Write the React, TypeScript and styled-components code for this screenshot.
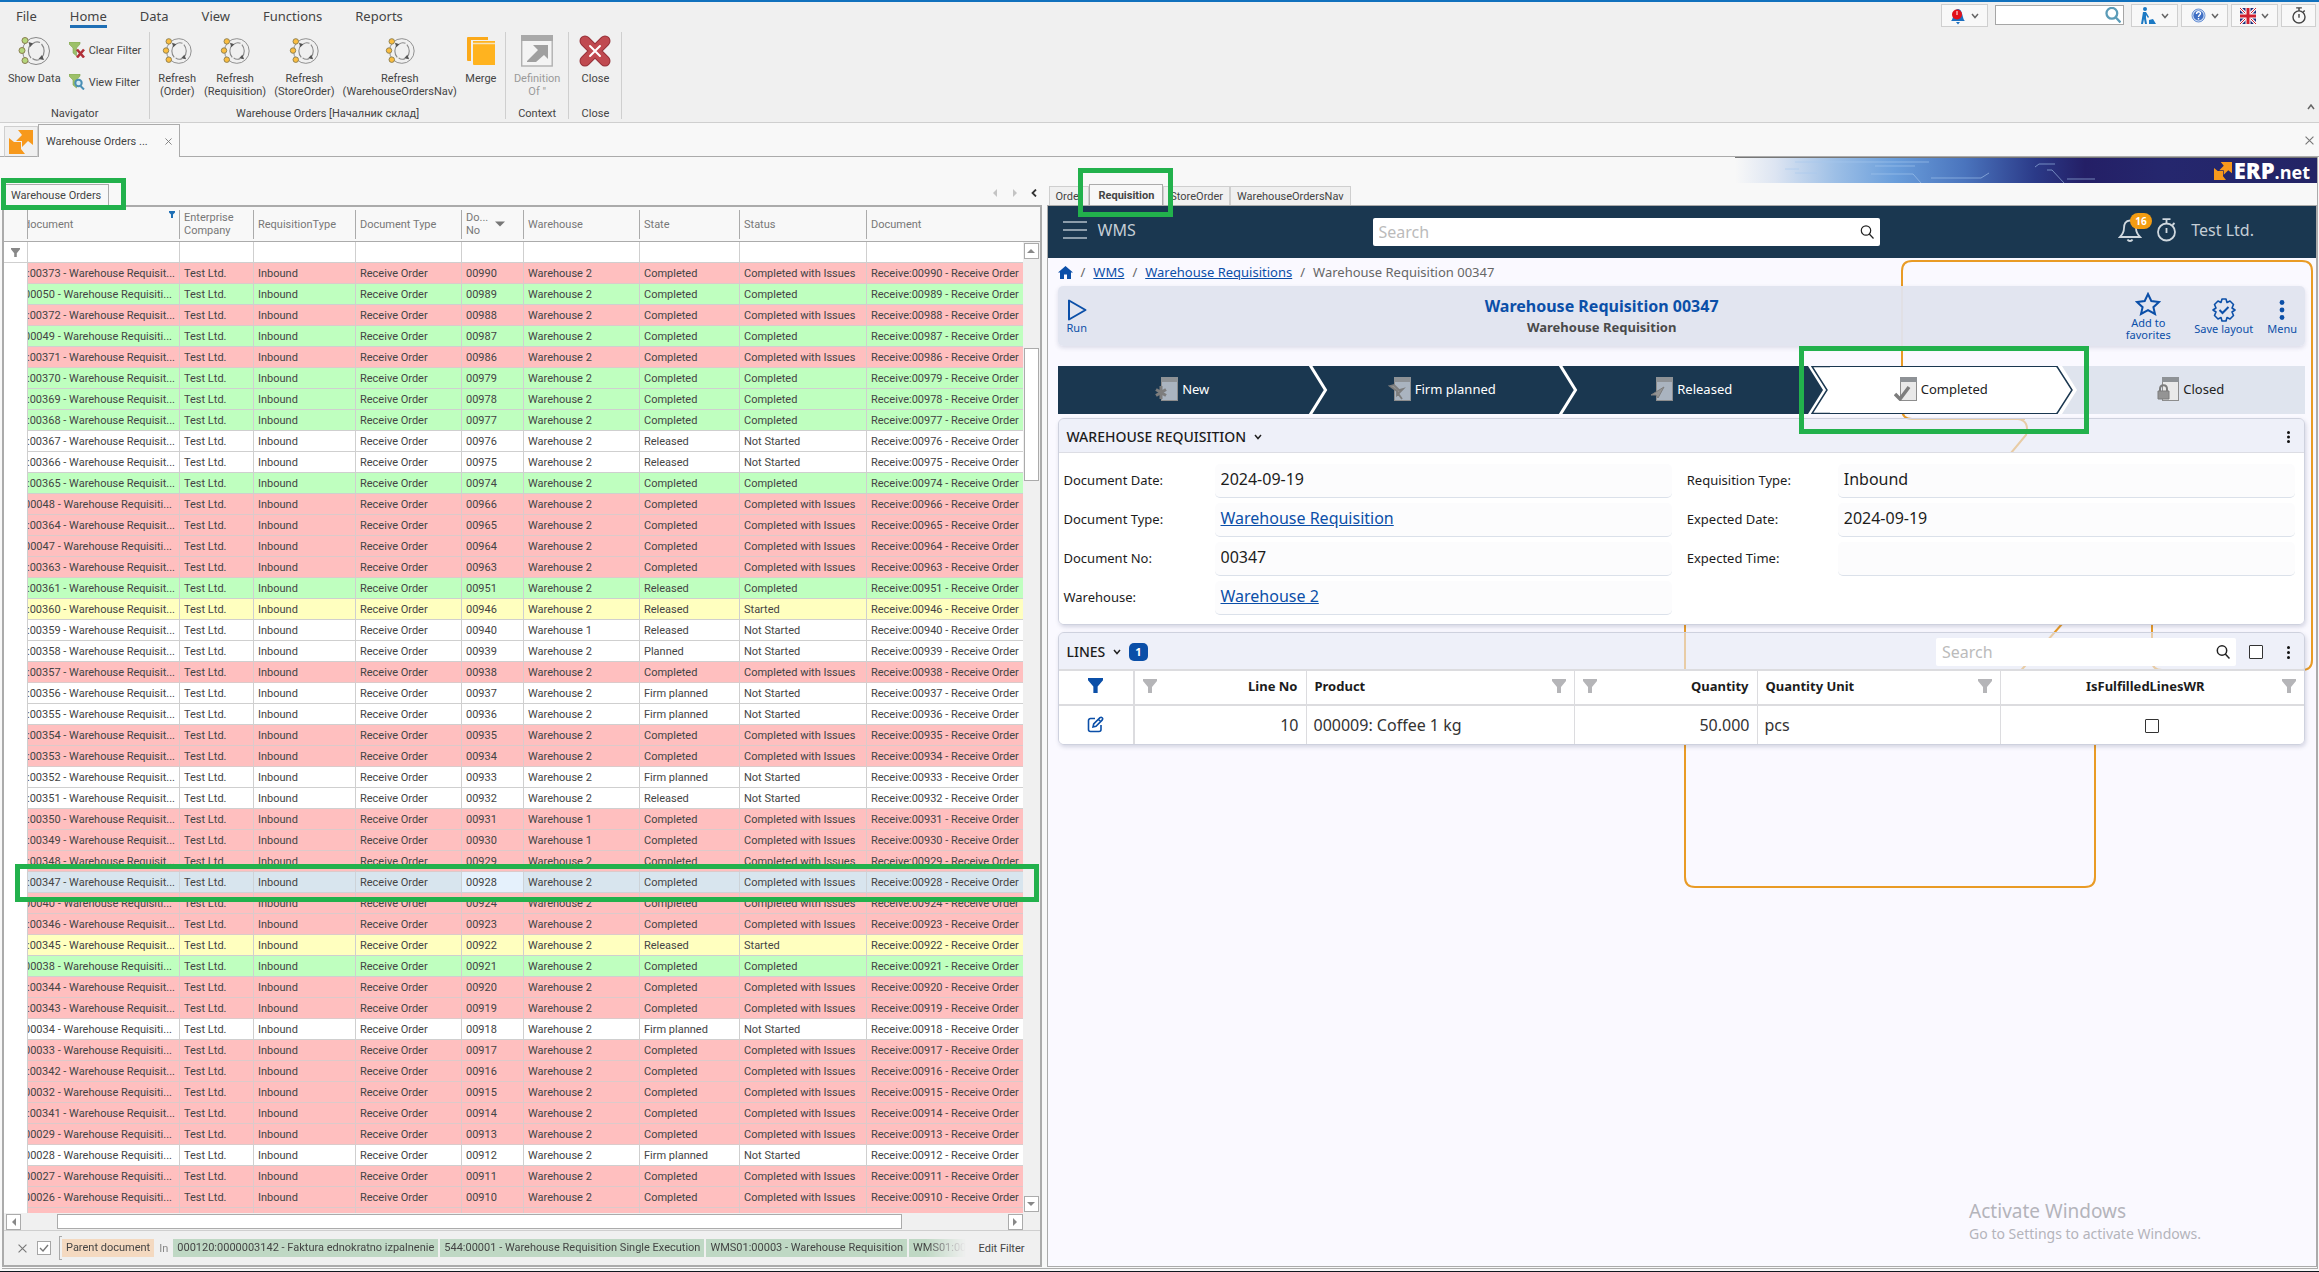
import React from "react";
import styled, { createGlobalStyle, css } from "styled-components";

const UI = `Roboto, "Liberation Sans", sans-serif`;
const WEB = `"Noto Sans", "Open Sans", sans-serif`;
const NAVY = "#1a3750";
const BLUE = "#0b4fa8";
const MARK = "#22b14c";
const LINE = "#ababab";
const ORANGE = "#f39c12";

const Global = createGlobalStyle`
  *, *::before, *::after { box-sizing: border-box; }
  body { margin: 0; background: #f8f8f8; font: 11px/13px ${UI}; color: #444; }
  button, input { font: inherit; color: inherit; margin: 0; }
  button { background: none; border: 0; padding: 0; }
  svg { display: block; flex: none; }
`;

const Page = styled.div`
  display: flex;
  flex-direction: column;
  height: 100vh;
  overflow: hidden;
  border-top: 2px solid #1171bd;
  border-bottom: 1px solid #10181f;
`;

/* ---------- ribbon ---------- */

const Ribbon = styled.header`
  background: #f0f0f0;
  border-bottom: 1px solid #cfcfcf;
  flex: none;
`;
const MenuRow = styled.div`
  display: flex;
  align-items: flex-start;
  height: 30px;
  padding: 0 3px 0 16px;
`;
const Menu = styled.nav`
  display: flex;
  gap: 33px;
  flex: 1;
`;
const MenuItem = styled.button<{ $on?: boolean }>`
  font: 13px/18px ${WEB};
  height: 26px;
  padding: 5px 0 0;
  border-bottom: 3px solid ${(p) => (p.$on ? "#1f6fb5" : "transparent")};
`;
const Tools = styled.div`
  display: flex;
  gap: 3px;
  padding-top: 2px;
`;
const ToolButton = styled.button<{ $narrow?: boolean }>`
  display: flex;
  align-items: center;
  justify-content: center;
  gap: 5px;
  width: ${(p) => (p.$narrow ? 35 : 47)}px;
  height: 23px;
  background: #f8f8f8;
  border: 1px solid #cfcfcf;
`;
const ToolSearch = styled.label`
  display: flex;
  align-items: center;
  width: 129px;
  height: 20px;
  margin: 1px 4px 0;
  padding-right: 2px;
  background: #fff;
  border: 1px solid #a6a6a6;
  input { flex: 1; min-width: 0; border: 0; outline: 0; background: none; }
`;
const GroupsRow = styled.div`
  display: flex;
  height: 90px;
`;
const Group = styled.section<{ $pad?: number }>`
  display: flex;
  flex-direction: column;
  justify-content: space-between;
  height: 87px;
  padding: 3px ${(p) => p.$pad ?? 8}px 0;
  border-right: 1px solid #cfcfcf;
`;
const GroupItems = styled.div`
  display: flex;
  gap: 8px;
`;
const GroupName = styled.div`
  text-align: center;
  line-height: 11px;
`;
const BigButton = styled.button<{ $off?: boolean }>`
  display: flex;
  flex-direction: column;
  align-items: center;
  gap: 5px;
  line-height: 13px;
  color: ${(p) => (p.$off ? "#9a9a9a" : "inherit")};
`;
const SmallStack = styled.div`
  display: flex;
  flex-direction: column;
  gap: 16px;
  padding-top: 7px;
`;
const SmallButton = styled.button`
  display: flex;
  align-items: center;
  gap: 4px;
  height: 16px;
`;
const Spring = styled.div`
  flex: 1;
`;
const Collapse = styled.button`
  align-self: flex-end;
  padding: 0 4px 12px 0;
`;

/* ---------- document tabs ---------- */

const DocTabs = styled.div`
  display: flex;
  align-items: flex-end;
  flex: none;
  height: 34px;
  padding-left: 4px;
  box-shadow: inset 0 -1px 0 ${LINE};
`;
const HomeTab = styled.button`
  display: grid;
  place-items: center;
  width: 34px;
  height: 31px;
  background: #f0f0f0;
  border: 1px solid #cfcfcf;
  border-bottom-color: ${LINE};
`;
const DocTab = styled.div`
  display: flex;
  align-items: center;
  justify-content: space-between;
  width: 142px;
  height: 33px;
  padding: 0 7px;
  background: #f8f8f8;
  border: 1px solid ${LINE};
  border-bottom: 0;
`;
const PlainButton = styled.button`
  display: grid;
  place-items: center;
`;
const CloseDoc = styled(PlainButton)`
  margin: 0 5px 12px auto;
`;

const DocPanel = styled.main`
  display: flex;
  flex-direction: column;
  flex: 1;
  min-height: 0;
  margin: 0 1px 2px 2px;
  border-right: 1px solid ${LINE};
  border-bottom: 1px solid ${LINE};
`;
const Banner = styled.div`
  display: flex;
  justify-content: flex-end;
  height: 26px;
  flex: none;
`;
const BannerArt = styled.div`
  position: relative;
  display: flex;
  align-items: center;
  justify-content: flex-end;
  width: 582px;
  padding-right: 7px;
  border-top: 1px solid #777;
  background: linear-gradient(90deg, #f8f8f8 0, #dde5f2 40px, #9dbfe6 100px, #6a9edb 160px, #4a74bd 230px, #2b3a88 300px, #241f66 350px, #25276e 430px, #232465 100%);
`;
const Circuit = styled.svg`
  position: absolute;
  left: 0;
  top: 0;
`;
const Brand = styled.span`
  display: flex;
  align-items: center;
  gap: 2px;
  color: #fff;
  font: 800 22px/24px "Open Sans", ${WEB};
  z-index: 1;
  small { font-size: 18px; font-weight: 700; }
`;
const Panes = styled.div`
  display: grid;
  grid-template-columns: 45fr 55fr;
  gap: 5px;
  flex: 1;
  min-height: 0;
`;
const Pane = styled.section`
  display: flex;
  flex-direction: column;
  min-width: 0;
  min-height: 0;
`;
const PaneTabs = styled.div<{ $side: "left" | "right" }>`
  display: flex;
  align-items: flex-end;
  flex: none;
  height: 22px;
  padding-left: ${(p) => (p.$side === "left" ? 1 : 2)}px;
`;
const PaneTab = styled.button<{ $on?: boolean; $mark?: "wide" | "tall" }>`
  position: relative;
  height: ${(p) => (p.$on ? 21 : 19)}px;
  padding: 0 ${(p) => (p.$mark === "tall" ? 8 : p.$on ? 7 : 6)}px;
  background: ${(p) => (p.$on ? "#f8f8f8" : "#f0f0f0")};
  border: 1px solid ${(p) => (p.$on ? LINE : "#cfcfcf")};
  border-bottom: 0;
  z-index: ${(p) => (p.$mark ? 2 : 0)};
  ${(p) =>
    p.$mark &&
    css`
      &::after {
        content: "";
        position: absolute;
        inset: ${p.$mark === "wide" ? "-7px -18px -5px -3px" : "-17px -11px -12px -12px"};
        border: 5px solid ${MARK};
        pointer-events: none;
      }
    `}
`;
const Arrows = styled.div`
  display: flex;
  gap: 12px;
  margin: 0 5px 8px auto;
`;

/* ---------- orders grid ---------- */

const GridFrame = styled.div`
  display: flex;
  flex-direction: column;
  flex: 1;
  min-height: 0;
  margin-bottom: 1px;
  border: 2px solid ${LINE};
  background: #fff;
`;
const GridArea = styled.div`
  display: flex;
  flex: 1;
  min-height: 0;
`;
const GridClip = styled.div`
  flex: 1;
  min-width: 0;
  overflow-x: visible;
  overflow-y: clip;
`;
const Orders = styled.table`
  width: 100%;
  table-layout: fixed;
  border-collapse: separate;
  border-spacing: 0;
`;
const HeadCell = styled.th<{ $edge?: boolean }>`
  height: 35px;
  padding: 0 0 0 4px;
  background: #f8f8f8 linear-gradient(${LINE}, ${LINE}) no-repeat right 3px / 1px 29px;
  background-size: ${(p) => (p.$edge ? "0 0" : "1px 29px")};
  border-bottom: 1px solid ${LINE};
  font-weight: 400;
  text-align: left;
  color: #777;
  white-space: nowrap;
  overflow: hidden;
`;
const HeadInner = styled.div<{ $cut?: boolean }>`
  display: flex;
  align-items: center;
  justify-content: ${(p) => (p.$cut ? "space-between" : "flex-start")};
  gap: 7px;
  height: 34px;
  padding-right: 5px;
  margin-left: ${(p) => (p.$cut ? -8 : 0)}px;
  > svg:last-child { align-self: ${(p) => (p.$cut ? "flex-start" : "center")}; margin-top: ${(p) => (p.$cut ? 4 : 0)}px; }
`;
const tones = {
  r: ["#ffbfbf", "#dccaca"],
  g: ["#bfffbf", "#cfcfcf"],
  y: ["#ffffbf", "#cfcfcf"],
  w: ["#ffffff", "#cfcfcf"],
  s: ["#d8e5ee", "#cdd3d8"],
} as const;
type Tone = keyof typeof tones;
const Row = styled.tr<{ $tone: Tone }>`
  background: ${(p) => tones[p.$tone][0]};
  --rule: ${(p) => tones[p.$tone][1]};
`;
const Cell = styled.td<{ $cut?: number; $focus?: boolean; $last?: boolean }>`
  height: 21px;
  padding: 0 0 0 ${(p) => (p.$cut ? 0 : 4)}px;
  text-indent: ${(p) => -(p.$cut ?? 0)}px;
  border-right: ${(p) => (p.$last ? 0 : 1)}px solid var(--rule);
  border-bottom: 1px solid var(--rule);
  background: ${(p) => (p.$focus ? "#e5f1fc" : "transparent")};
  white-space: nowrap;
  overflow: hidden;
`;
const Indicator = styled.td<{ $rule?: boolean }>`
  position: relative;
  background: #fff;
  border-right: 1px solid #cfcfcf;
  border-bottom: ${(p) => (p.$rule ? "1px solid #cfcfcf" : "0")};
  > svg { margin: 0 auto; }
`;
const RowMark = styled.span`
  position: absolute;
  left: 11px;
  top: -8px;
  width: calc(45vw - 20px);
  height: 38px;
  border: 5px solid ${MARK};
  pointer-events: none;
  z-index: 2;
`;
const VBar = styled.div`
  display: flex;
  flex-direction: column;
  width: 17px;
  padding: 0 1px 1px;
  background: #f0f0f0;
`;
const VBarHead = styled.div`
  flex: none;
  height: 35px;
  margin: 0 -1px 1px;
  background: #f8f8f8;
  border-bottom: 1px solid ${LINE};
`;
const ScrollButton = styled.button`
  display: grid;
  place-items: center;
  flex: none;
  width: 15px;
  height: 16px;
  background: #fff;
  border: 1px solid ${LINE};
`;
const VThumb = styled.div`
  height: 133px;
  margin: 89px 0 auto;
  background: #fff;
  border: 1px solid ${LINE};
`;
const HBar = styled.div`
  display: flex;
  align-items: center;
  flex: none;
  height: 17px;
  padding: 0 17px 0 2px;
  background: #f0f0f0;
`;
const HThumb = styled.div`
  flex: 1;
  height: 15px;
  margin: 0 106px 0 36px;
  background: #fff;
  border: 1px solid ${LINE};
`;
const FilterBar = styled.div`
  display: flex;
  align-items: center;
  flex: none;
  height: 35px;
  padding: 0 15px 0 14px;
  background: #f0f0f0;
  border-top: 1px solid #cfcfcf;
`;
const CheckBox = styled.input<{ $size: number; $soft?: boolean; $inHead?: boolean }>`
  appearance: none;
  display: inline-block;
  vertical-align: middle;
  width: ${(p) => p.$size}px;
  height: ${(p) => p.$size}px;
  margin: ${(p) => (p.$inHead ? "0 16px 0 5px" : 0)};
  background: #fff;
  border: 1px solid ${(p) => (p.$soft ? "#a6a6a6" : "#333")};
  border-radius: ${(p) => (p.$soft ? 0 : 1)}px;
`;
const CheckWrap = styled.label`
  position: relative;
  display: flex;
  margin: 0 8px 0 10px;
  svg { position: absolute; left: 2px; top: 3px; }
`;
const Bracket = styled.span`
  width: 3px;
  height: 24px;
  border: 1px solid #aaa;
  border-right: 0;
`;
const ChipStrip = styled.div`
  display: flex;
  align-items: center;
  gap: 2px;
  flex: 1;
  min-width: 0;
  overflow: hidden;
  mask-image: linear-gradient(90deg, #000 calc(100% - 40px), transparent);
`;
const Chip = styled.span<{ $field?: boolean }>`
  flex: none;
  padding: 0 4px;
  line-height: 18px;
  background: ${(p) => (p.$field ? "#f4d9c0" : "#bfd8c4")};
`;
const ChipOp = styled.span`
  padding: 0 3px;
  color: #888;
`;
const EditFilter = styled.button`
  margin-left: 13px;
`;

/* ---------- web client ---------- */

const Web = styled.div`
  position: relative;
  flex: 1;
  min-height: 0;
  margin-bottom: 1px;
  border: 1px solid ${LINE};
  background: #faf9ff;
  font: 13px/18px ${WEB};
  color: #1c1c1c;
  overflow: hidden;
`;
const Backdrop = styled.svg`
  position: absolute;
  right: 1px;
  top: 52px;
`;
const TopBar = styled.div`
  display: flex;
  align-items: center;
  height: 52px;
  background: ${NAVY};
  color: #c5ced6;
  font-size: 16px;
`;
const TopLeft = styled.div`
  display: flex;
  align-items: center;
  gap: 11px;
  width: 325px;
  padding: 0 0 4px 15px;
`;
const SearchBox = styled.label<{ $width: string }>`
  display: flex;
  align-items: center;
  width: ${(p) => p.$width};
  height: 28px;
  padding: 0 6px;
  background: #fff;
  border-radius: 2px;
  color: #222;
  font-size: 16px;
  input { flex: 1; min-width: 0; border: 0; outline: 0; padding: 0; background: none; }
  input::placeholder { color: #bbb; opacity: 1; }
`;
const TopRight = styled.div`
  display: flex;
  align-items: center;
  gap: 14px;
  margin-left: auto;
  padding: 0 62px 4px 0;
`;
const BellWrap = styled.button`
  position: relative;
  display: block;
`;
const BellBadge = styled.span`
  position: absolute;
  left: 12px;
  top: -5px;
  padding: 0 5px;
  border-radius: 8px;
  background: ${ORANGE};
  color: #fff;
  font: 700 10px/16px ${WEB};
`;
const Content = styled.div`
  position: relative;
  padding: 0 11px 0 10px;
`;
const Crumbs = styled.nav`
  display: flex;
  align-items: center;
  gap: 8px;
  height: 28px;
  color: #666;
`;
const Link = styled.a`
  color: ${BLUE};
  text-decoration: underline;
`;
const TitleBar = styled.div`
  display: flex;
  align-items: center;
  height: 60px;
  padding: 0 8px 0 9px;
  margin-bottom: 20px;
  background: rgba(224, 228, 239, 0.95);
  border-radius: 5px;
  box-shadow: 0 2px 4px rgba(60, 70, 110, 0.16);
`;
const TitleText = styled.div`
  flex: 1;
  text-align: center;
`;
const Title = styled.h1`
  margin: 0;
  font-size: 16px;
  line-height: 22px;
  color: ${BLUE};
`;
const SubTitle = styled.h2`
  margin: 0;
  font-size: 13px;
  line-height: 20px;
  color: #4a4a4a;
`;
const Action = styled.button<{ $width?: number }>`
  display: flex;
  flex-direction: column;
  align-items: center;
  gap: 1px;
  width: ${(p) => (p.$width ? p.$width + "px" : "auto")};
  color: ${BLUE};
  font-size: 11px;
  line-height: 12px;
`;
const Actions = styled.div`
  display: flex;
  align-items: center;
  gap: 14px;
`;
const Stepper = styled.ol`
  display: grid;
  grid-template-columns: repeat(5, minmax(0, 1fr));
  height: 48px;
  margin: 0 0 4px;
  padding: 0;
  list-style: none;
`;
type StepKind = "done" | "current" | "todo";
const Step = styled.li<{ $kind: StepKind; $first?: boolean }>`
  position: relative;
  display: flex;
  align-items: center;
  justify-content: center;
  gap: 3px;
  padding: 0 0 2px ${(p) => (p.$first ? 0 : 20)}px;
  color: ${(p) => (p.$kind === "done" ? "#fff" : "#222")};
  background: ${(p) => ({ done: NAVY, current: "#fff", todo: "#dfe4ee" })[p.$kind]};
  box-shadow: ${(p) => (p.$kind === "current" ? `inset 0 1px ${NAVY}, inset 0 -1px ${NAVY}` : "none")};
`;
const Chevron = styled.svg`
  position: absolute;
  left: 0;
  top: 0;
`;
const StepMark = styled.span`
  position: absolute;
  inset: -20px -33px -20px -7px;
  border: 5px solid ${MARK};
  pointer-events: none;
  z-index: 3;
`;
const Card = styled.section`
  margin-bottom: 7px;
  border: 1px solid #ced1de;
  border-radius: 6px;
  box-shadow: 1px 2px 4px rgba(60, 70, 110, 0.2);
  overflow: hidden;
`;
const CardHead = styled.div<{ $tall?: boolean }>`
  display: flex;
  align-items: center;
  gap: 8px;
  height: ${(p) => (p.$tall ? 36 : 34)}px;
  padding: 2px 14px 0 8px;
  background: rgba(231, 234, 245, 0.62);
  border-bottom: ${(p) => (p.$tall ? 0 : 1)}px solid #dcdde4;
`;
const CardTitle = styled.h3`
  margin: 0;
  font-size: 14px;
  font-weight: 500;
  line-height: 20px;
`;
const Count = styled.span`
  padding: 0 6px;
  border-radius: 5px;
  background: ${BLUE};
  color: #fff;
  font-weight: 700;
  font-size: 11px;
  line-height: 18px;
`;
const Fields = styled.div`
  display: grid;
  grid-template-columns: 1fr 1fr;
  column-gap: 15px;
  padding: 11px 9px 9px 5px;
  background: #fff;
`;
const FieldColumn = styled.div`
  display: flex;
  flex-direction: column;
  gap: 5px;
`;
const Field = styled.div`
  display: flex;
  align-items: center;
  height: 34px;
`;
const FieldLabel = styled.label`
  width: 151px;
  padding-bottom: 3px;
`;
const valueBox = css`
  flex: 1;
  min-width: 0;
  height: 34px;
  padding: 0 6px 3px;
  background: #fcfcfd;
  border: 0;
  border-bottom: 1px solid #dbe1ea;
  border-radius: 5px;
  font: 16px/30px ${WEB};
  outline: 0;
`;
const ValueInput = styled.input`
  ${valueBox}
`;
const ValueBox = styled.div`
  ${valueBox}
`;
const Lines = styled.table`
  width: 100%;
  table-layout: fixed;
  border-collapse: separate;
  border-spacing: 0;
  background: #fff;
  border-top: 2px solid #dcdcdf;
`;
const LineHead = styled.th<{ $right?: boolean; $thick?: boolean; $last?: boolean }>`
  height: 35px;
  padding: 0 8px 4px;
  border-right: ${(p) => (p.$last ? 0 : p.$thick ? 2 : 1)}px solid #dcdcdf;
  border-bottom: 2px solid #dcdcdf;
  text-align: left;
  > svg { margin: 0 auto; }
  > div { display: flex; align-items: center; justify-content: space-between; flex-direction: ${(p) => (p.$right ? "row-reverse" : "row")}; }
`;
const LineCell = styled.td<{ $align?: string; $thick?: boolean; $last?: boolean }>`
  height: 38px;
  padding: 0 7px 1px;
  border-right: ${(p) => (p.$last ? 0 : p.$thick ? 2 : 1)}px solid #dcdcdf;
  text-align: ${(p) => p.$align ?? "left"};
  font-size: 16px;
  color: #333;
  svg { margin: 0 auto; }
`;
const Watermark = styled.div`
  position: absolute;
  right: 115px;
  bottom: 22px;
  color: #b4b4bb;
  font-size: 14px;
  line-height: 20px;
  strong { display: block; font-size: 19px; line-height: 25px; font-weight: 400; }
`;

/* ---------- icons ---------- */

const Caret = ({ up, color = "#666" }: { up?: boolean; color?: string }) => (
  <svg width="8" height="6" viewBox="0 0 8 6" fill="none" stroke={color} strokeWidth="1.5">
    <path d={up ? "M1 5l3-4 3 4" : "M1 1l3 3.5L7 1"} />
  </svg>
);
const Triangle = ({ dir, color = "#888", size = 8 }: { dir: "l" | "r" | "u" | "d"; color?: string; size?: number }) => (
  <svg width={size} height={size} viewBox="0 0 8 8" fill={color}>
    <path d={{ l: "M6 0v8L2 4z", r: "M2 0v8l4-4z", u: "M0 6h8L4 2z", d: "M0 2h8L4 6z" }[dir]} />
  </svg>
);
const Cross = ({ size = 8 }: { size?: number }) => (
  <svg width={size} height={size} viewBox="0 0 8 8" stroke="#777" strokeWidth="1">
    <path d="M.5.5l7 7M7.5.5l-7 7" />
  </svg>
);
const Cycle = ({ color, size = 32 }: { color: string; size?: number }) => (
  <svg width="32" height="32" viewBox={size === 32 ? "0 0 32 32" : "-1.5 -1.5 35 35"} fill="none">
    <circle cx="18" cy="16" r="13.5" stroke="#888" strokeWidth="1" />
    <path d="M13 9c-3.500 4-3.500 10 0 14M23.500 9c3.500 4 3.500 10 0 14M15 8.500q3-2.500 7-1M21.500 24.500q-4 1.500-7-1" stroke="#888" strokeWidth="1.200" />
    <path d="M10.500 7l5 1.500-3.500 3.500zM26 25l-5.500-1 3.500-4z" fill="#555" />
    <g fill={color} stroke="#8a7d50" strokeWidth="1">
      <circle cx="7" cy="5.500" r="3" />
      <circle cx="4" cy="15.500" r="3" />
      <circle cx="7" cy="25.500" r="3" />
    </g>
  </svg>
);
const FilterGlyph = ({ size = 14, color = "#b5b5b8" }: { size?: number; color?: string }) => (
  <svg width={size} height={size} viewBox="0 0 14 14" fill={color}>
    <path d="M0 0h14v2L9 8v6H5V8L0 2z" />
  </svg>
);
const Magnifier = ({ size = 14, color = "#222", w = 1.2 }: { size?: number; color?: string; w?: number }) => (
  <svg width={size} height={size} viewBox="0 0 14 14" fill="none" stroke={color} strokeWidth={w}>
    <circle cx="6" cy="5.500" r="4.700" />
    <path d="M9.300 9L13.500 13.500" />
  </svg>
);
const GreenFilter = ({ view }: { view?: boolean }) => (
  <svg width="16" height="16" viewBox="0 0 16 16" fill="none">
    <path d="M0 0h11v2L7.500 6v8L4 11V6L0 2z" fill="#9cc069" stroke="#7fa350" strokeWidth=".6" />
    {view ? (
      <g stroke="#4a8fb5" strokeWidth="2">
        <circle cx="9.500" cy="9" r="3.200" fill="#d5eaf5" />
        <path d="M11.500 12l3.500 3.500" />
      </g>
    ) : (
      <path d="M8 7.500l7 8M15 7.500l-7 8" stroke="#b03038" strokeWidth="2.600" />
    )}
  </svg>
);
const MergeIcon = () => (
  <svg width="32" height="32" viewBox="0 0 32 32">
    <path d="M3 2h20v3H6v21H3a1 1 0 0 1-1-1V3a1 1 0 0 1 1-1z" fill="#fba91a" />
    <path d="M8 6h22v24H9a1 1 0 0 1-1-1z" fill="#ffb31f" />
    <path d="M8 8.500h22" stroke="#f6e3b8" strokeWidth="1.500" />
  </svg>
);
const DefinitionIcon = () => (
  <svg width="32" height="32" viewBox="0 0 32 32" fill="none">
    <rect x=".7" y="1" width="30.500" height="30" fill="#f4f4f4" stroke="#b0b0b0" strokeWidth="1.400" />
    <path d="M0 0h32v6H0z" fill="#a9a9a9" />
    <path d="M12 10h15v14l-4-4-8 7H6v-1l11-11z" fill="#a0a0a0" />
  </svg>
);
const CloseIcon = () => (
  <svg width="32" height="32" viewBox="0 0 32 32" strokeLinecap="round">
    <path d="M6 6l20 20M26 6L6 26" stroke="#97323a" strokeWidth="11" />
    <path d="M6 6l20 20M26 6L6 26" stroke="#c04a50" strokeWidth="9" />
    <path d="M11 11l10 10M21 11L11 21" stroke="#fff" strokeWidth="2" />
  </svg>
);
const ErpArrows = ({ size }: { size: number }) => (
  <svg width={size} height={size} viewBox="0 0 24 24" fill="#f7991c">
    <path d="M9 0h15v15l-5-4-6 6v-6H7l6-6z" />
    <path d="M0 8l5 4h7v7l4 5H0z" />
  </svg>
);
const Stopwatch = ({ w = 18, h = 20, color = "#444", s = 2 }: { w?: number; h?: number; color?: string; s?: number }) => (
  <svg width={w} height={h} viewBox="0 0 20 24" fill="none" stroke={color} strokeWidth={s}>
    <circle cx="10" cy="14" r="8.500" />
    <path d="M10 5.500V2M6 1.200h8M16 7l2-2M10 10v5" />
  </svg>
);
const BellIcon = () => (
  <svg width="24" height="24" viewBox="0 0 24 24" fill="none" stroke="#d0d8df" strokeWidth="1.800">
    <path d="M12 2.500c-4.500 0-6 3.500-6 7.500 0 4.500-1.500 6.500-4 9h20c-2.500-2.500-4-4.500-4-9 0-4-1.500-7.500-6-7.500zM9.500 21.500c1 2 4 2 5 0" />
  </svg>
);
const Dots = ({ h, r, color }: { h: number; r: number; color: string }) => (
  <svg width={r * 2} height={h} viewBox={`0 0 ${r * 2} ${h}`} fill={color}>
    <circle cx={r} cy={r} r={r} />
    <circle cx={r} cy={h / 2} r={r} />
    <circle cx={r} cy={h - r} r={r} />
  </svg>
);
const badges: Record<string, React.ReactNode> = {
  New: <path d="M6 9v13M1 12.500l10 6M11 12.500l-10 6" strokeWidth="3" />,
  "Firm planned": <path d="M2 9l4-1 5 5 4-1-6 6v-4l-3-2zM9 15l5 7" strokeWidth="1.800" />,
  Released: <path d="M14 10L1 18h5l2 3z" strokeWidth="1" />,
  Completed: <path d="M1 17l5 5 9-12" fill="none" strokeWidth="3.500" />,
  Closed: (
    <>
      <path d="M4 14v-2c0-5 7-5 7 0v2" fill="none" strokeWidth="2" />
      <path d="M2 14h11v8H2z" strokeWidth="1" />
    </>
  ),
};
const StepIcon = ({ name, dark }: { name: string; dark: boolean }) => (
  <svg width="24" height="24" viewBox="0 0 24 24">
    <rect x="6.500" y=".5" width="16" height="23" fill={dark ? "#aab4c0" : "#e9e9e9"} stroke="#8d8d8d" />
    <path d="M6 0h17v5H6z" fill="#8e9296" />
    <g stroke="#7d7d7d" fill="#949494">{badges[name]}</g>
  </svg>
);

/* ---------- data ---------- */

const C = "Completed";
const I = "Completed with Issues";
const N = "Not Started";
type Order = [doc: string, no: string, tone: Tone, state: string, status: string, wh?: number];
const orders: Order[] = [
  ["00373", "00990", "r", C, I], ["00050", "00989", "g", C, C], ["00372", "00988", "r", C, I],
  ["00049", "00987", "g", C, C], ["00371", "00986", "r", C, I], ["00370", "00979", "g", C, C],
  ["00369", "00978", "g", C, C], ["00368", "00977", "g", C, C], ["00367", "00976", "w", "Released", N],
  ["00366", "00975", "w", "Released", N], ["00365", "00974", "g", C, C], ["00048", "00966", "r", C, I],
  ["00364", "00965", "r", C, I], ["00047", "00964", "r", C, I], ["00363", "00963", "r", C, I],
  ["00361", "00951", "g", "Released", C], ["00360", "00946", "y", "Released", "Started"],
  ["00359", "00940", "w", "Released", N, 1], ["00358", "00939", "w", "Planned", N],
  ["00357", "00938", "r", C, I], ["00356", "00937", "w", "Firm planned", N],
  ["00355", "00936", "w", "Firm planned", N], ["00354", "00935", "r", C, I], ["00353", "00934", "r", C, I],
  ["00352", "00933", "w", "Firm planned", N], ["00351", "00932", "w", "Released", N],
  ["00350", "00931", "r", C, I, 1], ["00349", "00930", "r", C, I, 1], ["00348", "00929", "r", C, I],
  ["00347", "00928", "s", C, I], ["00040", "00924", "r", C, I], ["00346", "00923", "r", C, I],
  ["00345", "00922", "y", "Released", "Started"], ["00038", "00921", "g", C, C],
  ["00344", "00920", "r", C, I], ["00343", "00919", "r", C, I], ["00034", "00918", "w", "Firm planned", N],
  ["00033", "00917", "r", C, I], ["00342", "00916", "r", C, I], ["00032", "00915", "r", C, I],
  ["00341", "00914", "r", C, I], ["00029", "00913", "r", C, I], ["00028", "00912", "w", "Firm planned", N],
  ["00027", "00911", "r", C, I], ["00026", "00910", "r", C, I],
];
const columnWidths = [24, 152, 74, 102, 106, 62, 116, 100, 127];
const lineColumns = [76, 172, 268, 183, 243];
const steps: [string, StepKind][] = [
  ["New", "done"], ["Firm planned", "done"], ["Released", "done"], ["Completed", "current"], ["Closed", "todo"],
];

/* ---------- parts ---------- */

const RibbonBar = () => (
  <Ribbon>
    <MenuRow>
      <Menu>
        {["File", "Home", "Data", "View", "Functions", "Reports"].map((m) => (
          <MenuItem key={m} $on={m === "Home"}>{m}</MenuItem>
        ))}
      </Menu>
      <Tools>
        <ToolButton aria-label="Notifications">
          <svg width="16" height="18" viewBox="0 0 16 18">
            <path d="M1 14c3-2 2-12 7-12s4 10 7 12zM6 15h4l-2 2.500z" fill="#1b6fc0" />
            <circle cx="7" cy="7.500" r="5" fill="#e3101a" />
            <path d="M7 4v4" stroke="#fff" />
          </svg>
          <Caret />
        </ToolButton>
        <ToolSearch>
          <input type="text" aria-label="Find" />
          <Magnifier size={16} color="#5b9cb8" w={2} />
        </ToolSearch>
        <ToolButton aria-label="User">
          <svg width="15" height="17" viewBox="0 0 15 17" fill="#1b79c4">
            <circle cx="4" cy="2" r="2" />
            <path d="M2 5h3l3 5-1 1-2-3v3l1 6H4L3 12l-1 5H0zM8 13l4-1 3 5H8z" />
          </svg>
          <Caret />
        </ToolButton>
        <ToolButton aria-label="Help">
          <svg width="15" height="15" viewBox="0 0 15 15" fill="none">
            <circle cx="7.500" cy="7.500" r="6.500" fill="#c9d9f2" stroke="#6b93d6" strokeWidth="1" />
            <circle cx="7.500" cy="7.500" r="5" fill="#3f6fc4" />
            <path d="M5.500 6c0-3 4-3 4-.5 0 1.500-2 1.500-2 3.500M7.500 10v1.500" stroke="#fff" strokeWidth="1.400" />
          </svg>
          <Caret />
        </ToolButton>
        <ToolButton aria-label="Language">
          <svg width="16" height="16" viewBox="0 0 16 16">
            <path d="M0 0h16v16H0z" fill="#1f2d7a" />
            <path d="M0 0l16 16M16 0L0 16" stroke="#fff" strokeWidth="3" />
            <path d="M0 0l16 16M16 0L0 16" stroke="#d0202f" strokeWidth="1" />
            <path d="M8 0v16M0 8h16" stroke="#fff" strokeWidth="5" />
            <path d="M8 0v16M0 8h16" stroke="#d0202f" strokeWidth="3" />
          </svg>
          <Caret />
        </ToolButton>
        <ToolButton $narrow aria-label="Timer"><Stopwatch w={16} h={17} /></ToolButton>
      </Tools>
    </MenuRow>
    <GroupsRow>
      <Group>
        <GroupItems>
          <BigButton><Cycle color="#b4d67c" />Show Data</BigButton>
          <SmallStack>
            <SmallButton><GreenFilter />Clear Filter</SmallButton>
            <SmallButton><GreenFilter view />View Filter</SmallButton>
          </SmallStack>
        </GroupItems>
        <GroupName>Navigator</GroupName>
      </Group>
      <Group>
        <GroupItems>
          {["Order", "Requisition", "StoreOrder", "WarehouseOrdersNav"].map((n) => (
            <BigButton key={n}>
              <Cycle color="#fbbd3f" size={28} />
              <span>Refresh<br />({n})</span>
            </BigButton>
          ))}
          <BigButton><MergeIcon />Merge</BigButton>
        </GroupItems>
        <GroupName>Warehouse Orders [Началник склад]</GroupName>
      </Group>
      <Group>
        <GroupItems>
          <BigButton $off><DefinitionIcon /><span>Definition<br />Of "</span></BigButton>
        </GroupItems>
        <GroupName>Context</GroupName>
      </Group>
      <Group $pad={10}>
        <GroupItems>
          <BigButton><CloseIcon />Close</BigButton>
        </GroupItems>
        <GroupName>Close</GroupName>
      </Group>
      <Spring />
      <Collapse aria-label="Collapse ribbon"><Caret up /></Collapse>
    </GroupsRow>
  </Ribbon>
);

const OrdersPane = () => (
  <Pane>
    <PaneTabs $side="left">
      <PaneTab $on $mark="wide">Warehouse Orders</PaneTab>
      <Arrows>
        <Triangle dir="l" color="#c4c4c4" />
        <Triangle dir="r" color="#c4c4c4" />
        <svg width="6" height="8" viewBox="0 0 6 8" fill="none" stroke="#333" strokeWidth="1.800"><path d="M5 .5L1.500 4 5 7.500" /></svg>
      </Arrows>
    </PaneTabs>
    <GridFrame>
      <GridArea>
        <GridClip>
          <Orders>
            <colgroup>
              {columnWidths.map((w, i) => <col key={i} width={w} />)}
              <col />
            </colgroup>
            <thead>
              <tr>
                <HeadCell />
                <HeadCell>
                  <HeadInner $cut>
                    document
                    <svg width="6" height="7" viewBox="0 0 6 7" fill="#1f6fb5"><path d="M0 0h6v1.500L4 3.500V7H2V3.500L0 1.500z" /></svg>
                  </HeadInner>
                </HeadCell>
                <HeadCell>Enterprise<br />Company</HeadCell>
                <HeadCell>RequisitionType</HeadCell>
                <HeadCell>Document Type</HeadCell>
                <HeadCell><HeadInner><span>Do...<br />No</span><Triangle dir="d" color="#777" size={10} /></HeadInner></HeadCell>
                <HeadCell>Warehouse</HeadCell>
                <HeadCell>State</HeadCell>
                <HeadCell>Status</HeadCell>
                <HeadCell $edge>Document</HeadCell>
              </tr>
            </thead>
            <tbody>
              <Row $tone="w">
                <Indicator $rule><FilterGlyph size={9} color="#888" /></Indicator>
                {columnWidths.map((_, i) => <Cell key={i} $last={i === 8} />)}
              </Row>
              {orders.map(([doc, no, tone, state, status, wh = 2]) => {
                const short = doc.startsWith("000");
                return (
                  <Row key={no} $tone={tone}>
                    <Indicator>{tone === "s" && <RowMark />}</Indicator>
                    <Cell $cut={short ? 4 : 1}>{short ? `${doc} - Warehouse Requisiti...` : `:${doc} - Warehouse Requisit...`}</Cell>
                    <Cell>Test Ltd.</Cell>
                    <Cell>Inbound</Cell>
                    <Cell>Receive Order</Cell>
                    <Cell $focus={tone === "s"}>{no}</Cell>
                    <Cell>Warehouse {wh}</Cell>
                    <Cell>{state}</Cell>
                    <Cell>{status}</Cell>
                    <Cell $last>Receive:{no} - Receive Order</Cell>
                  </Row>
                );
              })}
              <Row $tone="r">
                <Indicator />
                {columnWidths.map((_, i) => <Cell key={i} $last={i === 8} />)}
              </Row>
            </tbody>
          </Orders>
        </GridClip>
        <VBar>
          <VBarHead />
          <ScrollButton aria-label="Scroll up"><Triangle dir="u" /></ScrollButton>
          <VThumb />
          <ScrollButton aria-label="Scroll down"><Triangle dir="d" /></ScrollButton>
        </VBar>
      </GridArea>
      <HBar>
        <ScrollButton aria-label="Scroll left"><Triangle dir="l" /></ScrollButton>
        <HThumb />
        <ScrollButton aria-label="Scroll right"><Triangle dir="r" /></ScrollButton>
      </HBar>
      <FilterBar>
        <PlainButton aria-label="Clear filter"><Cross size={9} /></PlainButton>
        <CheckWrap>
          <CheckBox type="checkbox" defaultChecked $size={14} $soft aria-label="Filter enabled" />
          <svg width="10" height="8" viewBox="0 0 10 8" fill="none" stroke="#777" strokeWidth="1.400"><path d="M1 4l3 3 5-6" /></svg>
        </CheckWrap>
        <Bracket />
        <ChipStrip>
          <Chip $field>Parent document</Chip>
          <ChipOp>In</ChipOp>
          <Chip>000120:0000003142 - Faktura ednokratno izpalnenie</Chip>
          <Chip>544:00001 - Warehouse Requisition Single Execution</Chip>
          <Chip>WMS01:00003 - Warehouse Requisition</Chip>
          <Chip>WMS01:000</Chip>
        </ChipStrip>
        <EditFilter>Edit Filter</EditFilter>
      </FilterBar>
    </GridFrame>
  </Pane>
);

const StepChevron = ({ kind }: { kind: StepKind }) => (
  <Chevron width="24" height="48" viewBox="0 0 24 48" fill="none">
    {kind === "done" && <path d="M3 -1l15.500 25L3 49" stroke="#fff" strokeWidth="3" />}
    {kind === "current" && (
      <>
        <path d="M0 0h6l15 24L6 48H0z" fill="#fff" />
        <path d="M0 0h2l15 24L2 48H0z" fill={NAVY} />
        <path d="M24 .5H6l15 23.500L6 47.500h18" stroke={NAVY} strokeWidth="1.500" />
      </>
    )}
    {kind === "todo" && (
      <>
        <path d="M0 0h6l15 24L6 48H0z" fill="#fff" />
        <path d="M0 .5h1l15 23.500L1 47.500H0" stroke={NAVY} strokeWidth="1.500" />
      </>
    )}
  </Chevron>
);

const TextField = ({ id, label, value }: { id: string; label: string; value: string }) => (
  <Field>
    <FieldLabel htmlFor={id}>{label}</FieldLabel>
    <ValueInput id={id} readOnly value={value} />
  </Field>
);
const LinkField = ({ label, value }: { label: string; value: string }) => (
  <Field>
    <FieldLabel as="span">{label}</FieldLabel>
    <ValueBox><Link href="#">{value}</Link></ValueBox>
  </Field>
);

const WebPane = () => (
  <Pane>
    <PaneTabs $side="right">
      <PaneTab>Order</PaneTab>
      <PaneTab $on $mark="tall"><b>Requisition</b></PaneTab>
      <PaneTab>StoreOrder</PaneTab>
      <PaneTab>WarehouseOrdersNav</PaneTab>
    </PaneTabs>
    <Web>
      <Backdrop width="640" height="640" viewBox="0 0 640 640" fill="none" stroke="#e99b25" strokeWidth="2">
        <path d="M350 161H237q-10 0-10-10V13q0-10 10-10h390q10 0 10 10v389q0 10-10 10H487q-10 0-10-10v-40M343 161q12 2 8 16l-30 36M387 366l-46 52M10 366v253q0 10 10 10h390q10 0 10-10V480" />
      </Backdrop>
      <TopBar>
        <TopLeft>
          <svg width="24" height="18" viewBox="0 0 24 18" stroke="#8c9dab" strokeWidth="2"><path d="M0 1h24M0 9h24M0 17h24" /></svg>
          WMS
        </TopLeft>
        <SearchBox $width="40%">
          <input type="search" placeholder="Search" aria-label="Search everything" />
          <Magnifier />
        </SearchBox>
        <TopRight>
          <BellWrap aria-label="Notifications"><BellIcon /><BellBadge>16</BellBadge></BellWrap>
          <Stopwatch w={21} h={24} color="#d0d8df" s={1.8} />
          Test Ltd.
        </TopRight>
      </TopBar>
      <Content>
        <Crumbs>
          <svg width="15" height="13" viewBox="0 0 15 13" fill={BLUE}><path d="M7.500 0L15 6.500h-2V13H9V8.500H6V13H2V6.500H0z" /></svg>
          /<Link href="#">WMS</Link>
          /<Link href="#">Warehouse Requisitions</Link>
          /<span>Warehouse Requisition 00347</span>
        </Crumbs>
        <TitleBar>
          <Action>
            <svg width="20" height="22" viewBox="0 0 20 22" fill="none" stroke={BLUE} strokeWidth="2" strokeLinejoin="round"><path d="M2 1.500v19L18.500 11z" /></svg>
            Run
          </Action>
          <TitleText>
            <Title>Warehouse Requisition 00347</Title>
            <SubTitle>Warehouse Requisition</SubTitle>
          </TitleText>
          <Actions>
            <Action $width={64}>
              <svg width="26" height="24" viewBox="0 0 26 24" fill="none" stroke={BLUE} strokeWidth="2"><path d="M13 2l3.300 7 7.700 1-5.600 5.200L20 22l-7-3.800L6 22l1.600-6.800L2 10l7.700-1z" /></svg>
              Add to favorites
            </Action>
            <Action>
              <svg width="24" height="24" viewBox="0 0 24 24" fill="none" stroke={BLUE} strokeWidth="1.600">
                <path d="M10 1h4l1 3.500 3-1.500 3.500 3.500L20 10l3 2-3 2 1.500 3.500L18 21l-3-1.500L14 23h-4l-1-3.500L6 21l-3.500-3.500L4 14l-3-2 3-2-1.500-3.500L6 3l3 1.500z" strokeLinejoin="round" />
                <path d="M7.500 12l3 3 6-6" strokeWidth="2" />
              </svg>
              Save layout
            </Action>
            <Action>
              <svg width="6" height="24" viewBox="0 0 6 24" fill={BLUE}><circle cx="3" cy="4.500" r="2.400" /><circle cx="3" cy="12" r="2.400" /><circle cx="3" cy="19.500" r="2.400" /></svg>
              Menu
            </Action>
          </Actions>
        </TitleBar>
        <Stepper>
          {steps.map(([name, kind], i) => (
            <Step key={name} $kind={kind} $first={i === 0}>
              {i > 0 && <StepChevron kind={kind} />}
              <StepIcon name={name} dark={kind === "done"} />
              {name}
              {kind === "current" && <StepMark />}
            </Step>
          ))}
        </Stepper>
        <Card>
          <CardHead>
            <CardTitle>WAREHOUSE REQUISITION</CardTitle>
            <Caret color="#222" />
            <Spring />
            <PlainButton aria-label="Section menu"><Dots h={12} r={1.5} color="#111" /></PlainButton>
          </CardHead>
          <Fields>
            <FieldColumn>
              <TextField id="doc-date" label="Document Date:" value="2024-09-19" />
              <LinkField label="Document Type:" value="Warehouse Requisition" />
              <TextField id="doc-no" label="Document No:" value="00347" />
              <LinkField label="Warehouse:" value="Warehouse 2" />
            </FieldColumn>
            <FieldColumn>
              <TextField id="req-type" label="Requisition Type:" value="Inbound" />
              <TextField id="exp-date" label="Expected Date:" value="2024-09-19" />
              <TextField id="exp-time" label="Expected Time:" value="" />
            </FieldColumn>
          </Fields>
        </Card>
        <Card>
          <CardHead $tall>
            <CardTitle>LINES</CardTitle>
            <Caret color="#222" />
            <Count>1</Count>
            <Spring />
            <SearchBox $width="300px">
              <input type="search" placeholder="Search" aria-label="Search lines" />
              <Magnifier w={1.5} />
            </SearchBox>
            <CheckBox type="checkbox" $size={14} $inHead aria-label="Select lines" />
            <PlainButton aria-label="Lines menu"><Dots h={13} r={1.5} color="#111" /></PlainButton>
          </CardHead>
          <Lines>
            <colgroup>
              {lineColumns.map((w, i) => <col key={i} width={w} />)}
              <col />
            </colgroup>
            <thead>
              <tr>
                <LineHead $thick><FilterGlyph size={15} color={BLUE} /></LineHead>
                <LineHead $right><div>Line No<FilterGlyph /></div></LineHead>
                <LineHead><div>Product<FilterGlyph /></div></LineHead>
                <LineHead $right><div>Quantity<FilterGlyph /></div></LineHead>
                <LineHead><div>Quantity Unit<FilterGlyph /></div></LineHead>
                <LineHead $last><div><Spring />IsFulfilledLinesWR<Spring /><FilterGlyph /></div></LineHead>
              </tr>
            </thead>
            <tbody>
              <tr>
                <LineCell $thick>
                  <svg width="17" height="17" viewBox="0 0 17 17" fill="none" stroke={BLUE} strokeWidth="1.600">
                    <path d="M8 2.500H3.500a2 2 0 0 0-2 2v9a2 2 0 0 0 2 2h8.500a2 2 0 0 0 2-2V9" />
                    <path d="M6 11l.7-3L13 1.700c1.500-1.200 3.400.6 2.300 2.200L9 10.300zM11.500 3.500l2 2" />
                  </svg>
                </LineCell>
                <LineCell $align="right">10</LineCell>
                <LineCell>000009: Coffee 1 kg</LineCell>
                <LineCell $align="right">50.000</LineCell>
                <LineCell>pcs</LineCell>
                <LineCell $align="center" $last><CheckBox type="checkbox" $size={14} aria-label="IsFulfilledLinesWR" /></LineCell>
              </tr>
            </tbody>
          </Lines>
        </Card>
      </Content>
      <Watermark><strong>Activate Windows</strong>Go to Settings to activate Windows.</Watermark>
    </Web>
  </Pane>
);

export default function App() {
  return (
    <>
      <Global />
      <Page>
        <RibbonBar />
        <DocTabs>
          <HomeTab aria-label="Start"><ErpArrows size={24} /></HomeTab>
          <DocTab>Warehouse Orders ...<PlainButton aria-label="Close tab"><Cross size={7} /></PlainButton></DocTab>
          <CloseDoc aria-label="Close"><Cross size={9} /></CloseDoc>
        </DocTabs>
        <DocPanel>
          <Banner>
            <BannerArt>
              <Circuit width="400" height="25" viewBox="0 0 400 25" fill="none" stroke="#a9c8ee" strokeOpacity=".6">
                <path d="M60 4h134M140 8h40M50 11h14M60 15h22M136 16h42l8 9M196 20h50l8-5M300 9l4-3h16M312 12h5l12 13M332 21h28" />
              </Circuit>
              <Brand><ErpArrows size={18} /><span>ERP<small>.net</small></span></Brand>
            </BannerArt>
          </Banner>
          <Panes>
            <OrdersPane />
            <WebPane />
          </Panes>
        </DocPanel>
      </Page>
    </>
  );
}
